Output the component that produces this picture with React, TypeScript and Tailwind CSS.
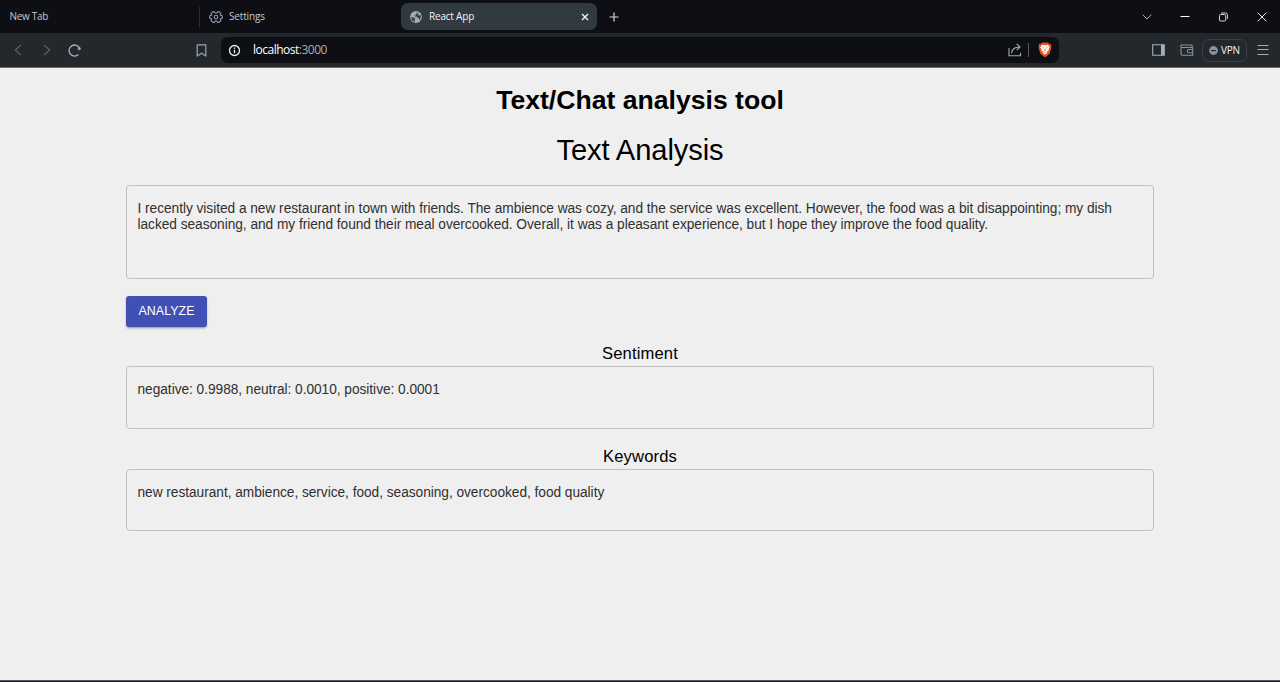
import React from 'react';

const chrome = "font-['Open_Sans',sans-serif]";

function Gear() {
  return (
    <svg width="14" height="14" viewBox="0 0 14 14" fill="none" stroke="#8f9aab" strokeWidth="1.15" strokeLinejoin="round">
      <g transform="rotate(90 7 7)">
        <path d="M5.3 1.6Q5.4 0.7 6.2 0.7H7.8Q8.6 0.7 8.7 1.6L8.9 2.7L10 2.3Q10.9 2 11.3 2.8L12.2 4.2Q12.6 5 12 5.5L11.1 6.2V7.8L12 8.5Q12.6 9 12.2 9.8L11.3 11.2Q10.9 12 10 11.7L8.9 11.3L8.7 12.4Q8.6 13.3 7.8 13.3H6.2Q5.4 13.3 5.3 12.4L5.1 11.3L4 11.7Q3.1 12 2.7 11.2L1.8 9.8Q1.4 9 2 8.5L2.9 7.8V6.2L2 5.5Q1.4 5 1.8 4.2L2.7 2.8Q3.1 2 4 2.3L5.1 2.7Z" />
      </g>
      <circle cx="7" cy="7" r="1.8" />
    </svg>
  );
}

function Globe() {
  return (
    <svg width="12" height="12" viewBox="0 0 12 12">
      <circle cx="6" cy="6" r="5.9" fill="#a6adb3" />
      <path d="M1.2 6.2L3.8 6.4L5.3 7.6L4.6 8.6L5 10.8C2.8 10.6 1.1 8.8 1.2 6.2Z M5.2 1.2L7.5 1.3L7.3 2.5L6 3L5.8 4.3L4.5 4.7L4.8 5.6L7 5.7L7.6 7L9 7.3L9 9.2C10.9 7.7 11.2 5.6 10.5 4L8.8 4.5L8 3.6L8.5 1.9Z" fill="#354047" />
    </svg>
  );
}

function Brave() {
  return (
    <svg width="14" height="16" viewBox="0 0 14 16">
      <path d="M4.2 0.5H9.8L11.1 1.8L12.4 1.7L13.6 3.5L13.1 4.8L13.4 5.7L11.6 11.8L7 15.4L2.4 11.8L0.6 5.7L0.9 4.8L0.4 3.5L1.6 1.7L2.9 1.8Z" fill="#e9501f" />
      <path d="M4.2 2.8L7 3.2L9.8 2.8L11.7 5.1L10.5 7.4L10.7 8.8L8.8 9.8L9.2 11L7 12.5L4.8 11L5.2 9.8L3.3 8.8L3.5 7.4L2.3 5.1Z" fill="#fff" />
      <path d="M3.7 5.2L6 5.8L5.5 6.5Z M10.3 5.2L8 5.8L8.5 6.5Z M6.7 6.4H7.3L7.6 8.5L7 9.2L6.4 8.5Z M5.4 9.6L7 10.2L8.6 9.6L7 10.9Z" fill="#e9501f" />
    </svg>
  );
}

function TabBar() {
  return (
    <div className="flex h-[33px] items-center bg-[#0d0f14] text-[10px] text-[#c5c8cc]">
      <div className="flex h-5 w-[200px] items-center border-r border-[#2c3036] pl-[9.5px]">
        <span className="tracking-[-0.3px]">New Tab</span>
      </div>
      <div className="flex w-[201px] items-center gap-[6px] pl-[9px]">
        <Gear />
        <span className="tracking-[-0.16px]">Settings</span>
      </div>
      <div className="flex h-[27px] w-[196px] items-center rounded-[7px] bg-[#313a3f] pl-[9px] pr-[8px] text-[#f1f3f4]">
        <Globe />
        <span className="ml-[7px] tracking-[-0.2px]">React App</span>
        <svg className="ml-auto" width="8" height="8" viewBox="0 0 8 8" stroke="#f4f6f7" strokeWidth="1.4">
          <path d="M1 1L7 7M7 1L1 7" />
        </svg>
      </div>
      <svg className="ml-[12px]" width="10" height="10" viewBox="0 0 10 10" stroke="#d5d8dc" strokeWidth="1.2">
        <path d="M5 0.5V9.5M0.5 5H9.5" />
      </svg>
      <div className="ml-auto flex items-center pr-[13px]">
        <svg width="10" height="6" viewBox="0 0 10 6" fill="none" stroke="#a8acb2" strokeWidth="1">
          <path d="M0.6 0.6L5 5L9.4 0.6" />
        </svg>
        <svg className="ml-[28px]" width="10" height="10" viewBox="0 0 10 10">
          <path d="M0.5 4H9.5V5H0.5Z" fill="#fff" />
        </svg>
        <svg className="ml-[29px]" width="9" height="10" viewBox="0 0 9 10" fill="none" stroke="#d3d5d8" strokeWidth="1">
          <rect x="0.5" y="2.5" width="6.2" height="6.5" rx="1" />
          <path d="M2 1H6.7Q8.4 1 8.4 2.7V7" />
        </svg>
        <svg className="ml-[29px]" width="10" height="10" viewBox="0 0 10 10" stroke="#e4e5e7" strokeWidth="1">
          <path d="M0.7 0.7L9.3 9.3M9.3 0.7L0.7 9.3" />
        </svg>
      </div>
    </div>
  );
}

function Toolbar() {
  return (
    <div className="flex h-[35px] items-center border-b border-[#686b6d] bg-[#23282c]">
      <svg className="ml-[14px]" width="8" height="12" viewBox="0 0 8 12" fill="none" stroke="#5e666d" strokeWidth="1.1">
        <path d="M7 0.8L1.3 6L7 11.2" />
      </svg>
      <svg className="ml-[21px]" width="8" height="12" viewBox="0 0 8 12" fill="none" stroke="#5e666d" strokeWidth="1.1">
        <path d="M1 0.8L6.7 6L1 11.2" />
      </svg>
      <svg className="ml-[17px]" width="14" height="13" viewBox="0 0 14 13" fill="none" stroke="#a9b1b8" strokeWidth="1.3">
        <path d="M10.4 10.5A5.5 5.5 0 1 1 11.6 4.3" />
        <circle cx="11.3" cy="4.6" r="1.2" fill="#a9b1b8" strokeWidth="0.6" />
      </svg>
      <svg className="ml-[114px]" width="11" height="13" viewBox="0 0 11 13" fill="none" stroke="#9ba5ad" strokeWidth="1.2" strokeLinejoin="round">
        <path d="M1.2 0.8H9.8V12.1L5.5 9.2L1.2 12.1Z" />
      </svg>
      <div className="ml-[14px] flex h-[26px] w-[838px] items-center rounded-[7px] bg-[#0d0f14] pl-[7px] pr-[7.5px]">
        <svg width="13" height="13" viewBox="0 0 13 13" fill="none" stroke="#eceeef" strokeWidth="1.3">
          <circle cx="6.5" cy="6.5" r="5" />
          <path d="M6.5 5.7V9.3M6.5 3.5V4.8" />
        </svg>
        <span className="ml-[12px] text-[12px] tracking-[-0.5px] text-white">
          localhost<span className="text-[#a9acb0]">:3000</span>
        </span>
        <svg className="ml-auto" width="14" height="14" viewBox="0 0 14 14" fill="none" stroke="#a5aab1" strokeWidth="1.1">
          <path d="M1 5V12.7H12.5V9.7" />
          <path d="M3.6 10.2C3.8 6.3 6 4 11.8 4M8.7 0.9L12 4L8.7 7.1" />
        </svg>
        <div className="ml-[6px] h-[14px] w-px bg-[#5a5d62]" />
        <div className="ml-[9px]"><Brave /></div>
      </div>
      <div className="ml-auto flex items-center pr-[11px]">
        <svg width="13" height="12" viewBox="0 0 13 12" fill="none" stroke="#a3b0b8" strokeWidth="1.1">
          <path d="M0.7 0.7H12.3V11.3H0.7Z" />
          <path d="M9 1H12V11H9Z" fill="#a3b0b8" stroke="none" />
        </svg>
        <svg className="ml-[15px]" width="14" height="12" viewBox="0 0 14 12" fill="none" stroke="#87939b" strokeWidth="1.1">
          <path d="M12 3.2V1H1V9.8Q1 11.2 2.4 11.2H12.7V3.5H1" />
          <path d="M13 5.5H8.6Q7.3 5.5 7.3 7.1Q7.3 8.7 8.6 8.7H13" />
        </svg>
        <div className="ml-[8px] flex h-[23px] w-[45px] items-center rounded-[7px] border border-[#3b4045] pl-[6px] text-[10px] text-[#f1f2f4]">
          <svg width="9" height="9" viewBox="0 0 9 9">
            <circle cx="4.5" cy="4.5" r="4.4" fill="#8e91a4" />
            <path d="M2 4H7V5.2H2Z" fill="#23282c" />
          </svg>
          <span className="ml-[3px] tracking-[-0.3px]">VPN</span>
        </div>
        <svg className="ml-[10px]" width="12" height="10" viewBox="0 0 12 10" fill="#a1abb2">
          <path d="M0.5 0H11.5V1H0.5ZM0.5 4H11.5V5H0.5ZM0.5 9H11.5V10H0.5Z" />
        </svg>
      </div>
    </div>
  );
}

const field = 'block w-full resize-none overflow-hidden rounded-[4px] border border-[#c1c1c1] bg-transparent pl-[10.5px] pr-[11px] text-[13.71px] leading-[16.3px] tracking-[-0.033px] text-[#303030] outline-none';

export default function App() {
  return (
    <div className="flex h-[682px] w-[1280px] flex-col overflow-hidden bg-[#efefef]">
      <header className={chrome}>
        <TabBar />
        <Toolbar />
      </header>
      <main className="mx-auto flex w-[1028px] flex-1 flex-col font-['Liberation_Sans',Arial,sans-serif] text-black">
        <h1 className="mt-[15px] text-center text-[26.6px] font-bold leading-[34px]">Text/Chat analysis tool</h1>
        <h2 className="mt-[15px] text-center text-[29.14px] leading-[36px] tracking-[-0.1px]">Text Analysis</h2>
        <textarea
          className={field + ' mt-[17px] h-[94px] pt-[15px]'}
          defaultValue="I recently visited a new restaurant in town with friends. The ambience was cozy, and the service was excellent. However, the food was a bit disappointing; my dish lacked seasoning, and my friend found their meal overcooked. Overall, it was a pleasant experience, but I hope they improve the food quality."
        />
        <button className="mt-[17px] h-[31px] w-[81px] rounded-[3px] bg-[#3f51b5] text-[12.4px] font-medium leading-[31px] tracking-[0.05px] text-white shadow-[0_2px_3px_-1px_rgba(0,0,0,0.25),0_1px_2px_rgba(0,0,0,0.2)]">
          ANALYZE
        </button>
        <h3 className="mt-[15px] pb-px text-center text-[16.6px] leading-[23px] tracking-[0.13px]">Sentiment</h3>
        <div className={field + ' h-[63px] pt-[15px]'}>negative: 0.9988, neutral: 0.0010, positive: 0.0001</div>
        <h3 className="mt-[16px] text-center text-[16.6px] leading-[24px] tracking-[0.13px]">Keywords</h3>
        <div className={field + ' h-[62px] pt-[15px]'}>new restaurant, ambience, service, food, seasoning, overcooked, food quality</div>
      </main>
      <div className="h-[2px] border-t border-[#55565c] bg-[#1c1f2b]" />
    </div>
  );
}
